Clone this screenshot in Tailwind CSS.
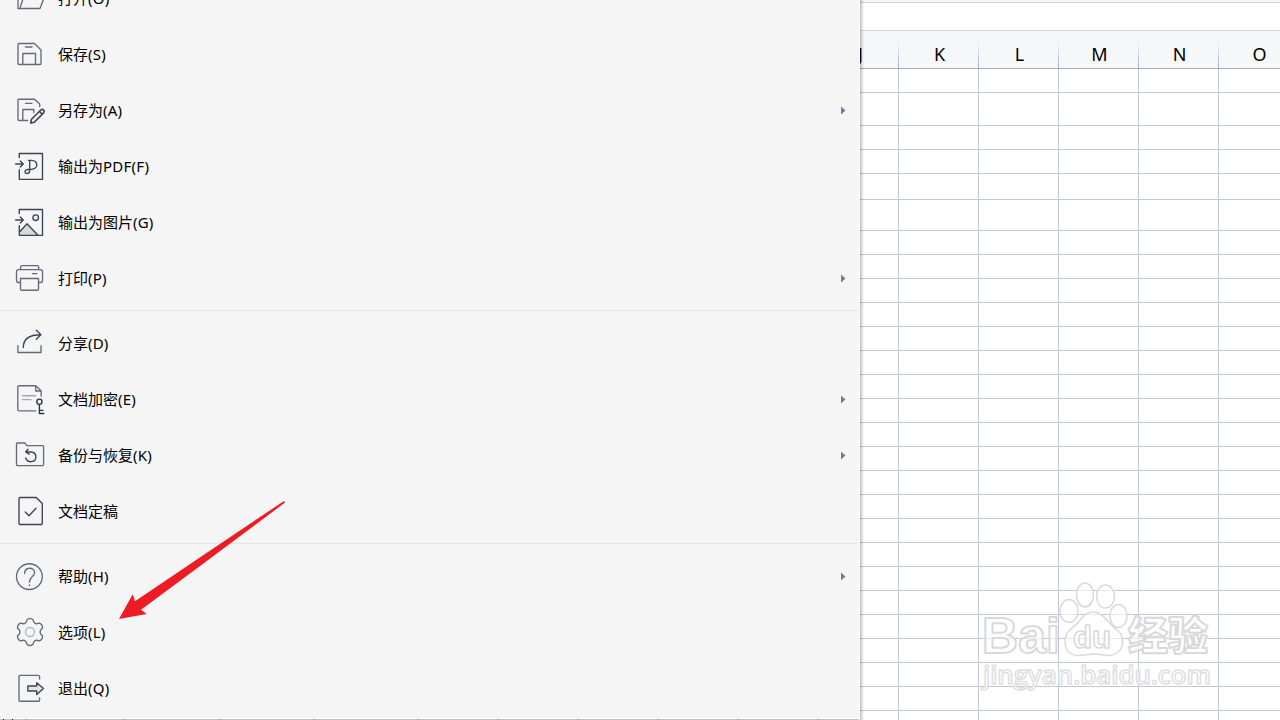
<!DOCTYPE html>
<html lang="zh-CN">
<head>
    <meta charset="UTF-8">
    <meta name="viewport" content="width=device-width, initial-scale=1.0">
    <title>文件菜单</title>
    <script src="https://cdn.jsdelivr.net/npm/@tailwindcss/browser@4"></script>
</head>
<body class="relative h-[720px] w-[1280px] overflow-hidden bg-white font-['Noto_Sans','Noto_Sans_CJK_SC',sans-serif] text-black">
    <div class="flex h-full">
        <!-- File menu -->
        <div class="relative z-10 h-full w-[860px] shrink-0 overflow-hidden border-r border-[#fcfcfc] bg-[#f5f5f5]">
            <ul id="menu" class="-mt-[29px]"></ul>
            <div class="mt-px h-px bg-white"></div>
            <div id="edge" class="relative h-px bg-[#bfc0c4]"></div>
        </div>

        <!-- Sheet -->
        <div class="relative min-w-0 flex-1 overflow-hidden">
            <div class="h-[3px] border-b border-[#d3d5df] bg-[#f5f7f9]"></div>
            <div class="h-7 border-b border-[#d3d5df] bg-white"></div>
            <div id="header" class="flex h-[38px] items-end border-b border-[#a5aec8] bg-[#f5f7f9]"></div>
            <div id="rows"></div>
            <div class="absolute inset-y-0 left-0 w-[4px] bg-gradient-to-r from-black/25 to-transparent"></div>
        </div>
    </div>

    <!-- Watermark -->
    <svg class="absolute left-[970px] top-[570px] h-[150px] w-[250px] font-['Open_Sans','Noto_Sans_CJK_SC',sans-serif]" viewBox="0 0 250 150" fill="#fff" fill-opacity=".6" stroke="#d9d9d9" stroke-width="1.500" stroke-linejoin="round">
        <text class="font-['Liberation_Sans']" x="12" y="83" font-size="50" font-weight="700" textLength="78" lengthAdjust="spacingAndGlyphs" stroke-width="2">Bai</text>
        <ellipse cx="99" cy="41" rx="9" ry="11.500"/>
        <ellipse cx="115" cy="25" rx="8.500" ry="12"/>
        <ellipse cx="135.500" cy="26.500" rx="9" ry="11.500"/>
        <ellipse cx="148.500" cy="46" rx="8.500" ry="11.500"/>
        <path d="M123 42C113 42 111 52 102 58C93 64 93 78 100 83C107 88 115 84 124 84C133 84 140 88 147 83C155 77 154 65 147 60C137 53 134 42 123 42Z"/>
        <text class="font-['Liberation_Sans']" x="103" y="78" font-size="31" font-weight="700" textLength="38" lengthAdjust="spacingAndGlyphs">du</text>
        <text x="158" y="80" font-size="40" font-weight="900" textLength="80" lengthAdjust="spacingAndGlyphs" stroke-width="2">经验</text>
        <text x="13" y="114" font-size="25" font-weight="600" textLength="228" lengthAdjust="spacingAndGlyphs" stroke="#dfdfdf">jingyan.baidu.com</text>
    </svg>

    <!-- Pointer arrow -->
    <svg class="absolute left-[110px] top-[490px] z-20 h-[140px] w-[190px]" viewBox="110 490 190 140">
        <path fill="#ed1c24" d="M119 619L132.700 594.300L135 601.300Q212 549 284 501L285 502.500Q214 556 141 609.700L146.700 614Z"/>
    </svg>

    <script>
        const icons = {
            open: '<path d="M18 20V37.500H40L44 27M20.300 36L24 25"/>',
            save: '<path d="M19 16.500H34.500L41 23V36.500Q41 37.500 40 37.500H19Q18 37.500 18 36.500V17.500Q18 16.500 19 16.500ZM22.800 37.500V26.500H35.500V37.500M25.500 20H32"/>',
            saveAs: '<path d="M27.700 37.500H19Q18 37.500 18 36.500V17Q18 16.200 19 16.200H34.500L39.700 21V23.500M22.800 37.500V26.500H33.800V29.500M25.500 20.300H32"/><path stroke="#3c4150" stroke-width="1.600" d="M30.700 40L31.500 36.200L40.800 27Q42.300 25.800 43.600 27.100Q44.900 28.500 43.600 29.900L34.300 39.200ZM39.500 28.500L42 31"/>',
            pdf: '<path stroke="#3c4354" d="M19.300 18.500V14.500H42.500V40.300H19.300V30.700M15.700 25H23M20.300 22L23.300 25L20.300 28"/><path stroke="#3c4354" d="M28.500 21.300H31.500C38.700 21.300 38.500 30.200 31.500 30.300C29 30.300 27.500 30 26 31C24.300 32.300 24.800 34.600 27 34.600C29 34.600 29.700 33.500 29.700 31.500V21.500"/>',
            image: '<path fill="#d6d9dd" stroke="none" d="M19.300 37.300L27 28.700L38 40.300H19.300Z"/><path stroke="#3c4354" d="M19.300 18.500V14.500H42.500V40.300H19.300V30.700M15.700 25H23M20.300 22L23.300 25L20.300 28M19.300 37.300L27 28.700L38 40.300"/><circle stroke="#3c4354" cx="35.700" cy="22.700" r="2.800"/>',
            print: '<path d="M20.600 18.500V16Q20.600 14.600 22 14.600H37.300Q38.700 14.600 38.700 16V18.500M20.500 31.500H18.500Q16.500 31.500 16.500 29.500V20.700Q16.500 18.600 18.500 18.600H40.500Q42.500 18.600 42.500 20.700V29.500Q42.500 31.500 40.500 31.500H38.500M20.500 27.500H38.500V38Q38.500 39.200 37.300 39.200H21.700Q20.500 39.200 20.500 38ZM32.500 22.600H37"/>',
            share: '<path d="M17.900 29.700V36.500H41V29.700"/><path stroke="#3c4354" d="M23.300 31.500C23.300 23 29 18.700 40.700 18.700M36.300 14.300L40.900 18.700L36.300 23.300"/>',
            encrypt: '<path d="M35.700 38.800H19Q17.800 38.800 17.800 37.600V15Q17.800 13.700 19 13.700H35.700L41.200 19V24M35.700 13.700V19H41.200"/><path stroke="#a3a7b0" d="M22.300 23.700H35.700M22.300 27.600H31"/><path stroke="#2d3142" d="M39.400 32.400V41.500M39.400 38.300H43M39.400 41.500H43.700"/><circle stroke="#2d3142" cx="39.400" cy="29.700" r="2.600"/>',
            backup: '<path d="M17.500 15H25L26.700 17.600H42.500Q43.600 17.600 43.600 18.700V36.500Q43.600 37.600 42.500 37.600H17.600Q16.500 37.600 16.500 36.500V16Q16.500 15 17.500 15Z"/><path stroke="#3c4150" d="M28 21.200L25.700 24L29.300 26.300M25.900 24H31C37.500 24.300 37.500 33.500 31 33.700C28.500 33.700 26.500 32.500 25.700 30"/>',
            finalize: '<path stroke="#3c4354" d="M20 13.500H36.300L42.300 19.500V39.500Q42.300 40.500 41.300 40.500H20Q19 40.500 19 39.500V14.500Q19 13.500 20 13.500ZM25.300 28L29 31.700L36 24.300"/>',
            help: '<circle cx="29.400" cy="27.600" r="12.900"/><path d="M24.600 24.500C24.600 17.500 34.600 17.700 34.600 23.700C34.600 27.500 29.400 27.500 29.400 33M29.400 35.800V36.500"/>',
            gear: '<g transform="translate(30 27)"><path d="M-3.800 -9.900L-3 -12.300Q0 -15 3 -12.300L3.800 -9.900Q5.300 -8 6.670 -8.240L9.500 -8.900Q12.800 -7.400 12.500 -3.700L10.470 -1.660Q9.800 0 10.470 1.660L12.500 3.700Q12.800 7.400 9.500 8.900L6.670 8.240Q5.300 8 3.800 9.900L3 12.300Q0 15 -3 12.300L-3.800 9.900Q-5.300 8 -6.670 8.240L-9.500 8.900Q-12.800 7.400 -12.500 3.700L-10.470 1.660Q-9.800 0 -10.470 -1.660L-12.500 -3.700Q-12.800 -7.400 -9.500 -8.900L-6.670 -8.240Q-5.300 -8 -3.800 -9.900Z"/><circle stroke="#b3b6bd" cx="0" cy="0" r="4.500"/></g>',
            exit: '<path d="M39.600 18V15.500Q39.600 14.400 38.500 14.400H20Q19 14.400 19 15.500V39Q19 40.200 20 40.200H38.500Q39.600 40.200 39.600 39V37"/><path stroke="#3c4150" fill="#e3e5e9" d="M27.800 25H36.700V21.700L43.500 27.500L36.700 33.500V30H27.800Z"/>'
        };

        // icon, label, key, submenu; null draws a separator
        const items = [
            ['open', '打开', '(O)'],
            ['save', '保存', '(S)'],
            ['saveAs', '另存为', '(A)', true],
            ['pdf', '输出为', 'PDF(F)'],
            ['image', '输出为图片', '(G)'],
            ['print', '打印', '(P)', true],
            null,
            ['share', '分享', '(D)'],
            ['encrypt', '文档加密', '(E)', true],
            ['backup', '备份与恢复', '(K)', true],
            ['finalize', '文档定稿', ''],
            null,
            ['help', '帮助', '(H)', true],
            ['gear', '选项', '(L)'],
            ['exit', '退出', '(Q)']
        ];

        document.getElementById('menu').innerHTML = items.map(item => {
            if (!item) return '<li class="mt-[3px] mb-[5px] mr-[2px] h-px bg-[#e4e4e8]"></li>';
            const [icon, label, key, submenu] = item;
            return `<li class="flex h-14 items-center">
                <svg class="h-14 w-[46px] shrink-0" viewBox="0 0 46 56" fill="none" stroke="#646a78" stroke-width="1.350" stroke-linejoin="round" stroke-linecap="round">${icons[icon]}</svg>
                <span class="ml-3 flex-1 pb-[2px] text-[15px] leading-5">${label}<span class="tracking-[0.2px]">${key}</span></span>
                ${submenu ? '<svg class="mr-[13px] mb-[2px] h-[9px] w-[5px]" viewBox="0 0 5 9"><path fill="#717b95" d="M0 0.500L4.500 4.500L0 8.500Z"/></svg>' : ''}
            </li>`;
        }).join('');

        // column ticks and row-number tips showing under the menu
        const ticks = [26, 123, 219, 314, 418, 498, 578, 658, 738, 818];
        document.getElementById('edge').innerHTML =
            ticks.map(x => `<i class="absolute h-px w-px bg-[#8f9096]" style="left: ${x}px"></i>`).join('') +
            [3, 12].map(x => `<i class="absolute h-px w-px bg-[#1c1c1c]" style="left: ${x}px"></i>`).join('');

        const columns = ['J', 'K', 'L', 'M', 'N', 'O'];
        document.getElementById('header').innerHTML = columns.map((name, i) =>
            `<div class="flex h-full shrink-0 items-end ${i === 0 ? '-ml-[41px]' : ''} w-20">
                <span class="flex-1 ${i === 0 ? 'pl-[4px]' : 'pl-[2px]'} pb-[2px] text-center text-lg leading-6">${name}</span>
                <span class="h-[27px] w-px bg-gradient-to-b from-transparent to-[#a5aec8]"></span>
            </div>`
        ).join('');

        const heights = [24, 33, 24, 24, 26, 31].concat(Array(21).fill(24));
        document.getElementById('rows').innerHTML = heights.map(h =>
            `<div class="flex border-b border-[#c0c8dc]" style="height: ${h}px">` +
            columns.map((name, i) => `<div class="${i === 0 ? '-ml-[41px]' : ''} w-20 shrink-0 border-r border-[#c0c8dc]"></div>`).join('') +
            '</div>'
        ).join('');
    </script>
</body>
</html>
